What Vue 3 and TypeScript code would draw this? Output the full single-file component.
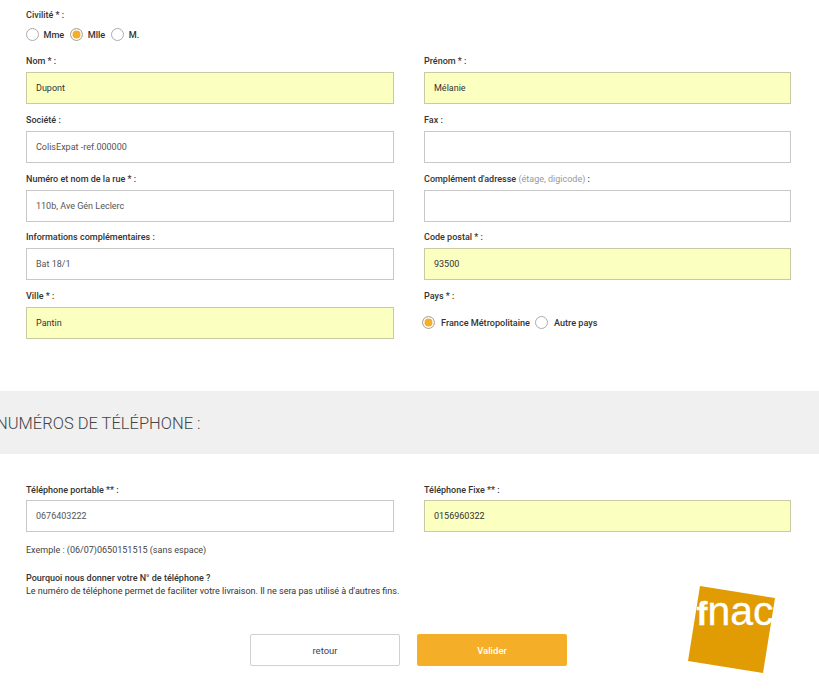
<script setup lang="ts">
interface Field { label: string; hint?: string; value: string; filled?: boolean }
const addressFields: Field[] = [
  { label: 'Nom * :', value: 'Dupont', filled: true },
  { label: 'Prénom * :', value: 'Mélanie', filled: true },
  { label: 'Société :', value: 'ColisExpat -ref.000000' },
  { label: 'Fax :', value: '' },
  { label: 'Numéro et nom de la rue * :', value: '110b, Ave Gén Leclerc' },
  { label: "Complément d'adresse", hint: '(étage, digicode)', value: '' },
  { label: 'Informations complémentaires :', value: 'Bat 18/1' },
  { label: 'Code postal * :', value: '93500', filled: true },
  { label: 'Ville * :', value: 'Pantin', filled: true },
]
const phoneFields: Field[] = [
  { label: 'Téléphone portable ** :', value: '0676403222' },
  { label: 'Téléphone Fixe ** :', value: '0156960322', filled: true },
]
</script>

<template>
  <div class="page">
    <section class="identity">
      <div class="label">Civilité * :</div>
      <div class="radios civ">
        <span class="radio"></span><span class="opt">Mme</span>
        <span class="radio on"></span><span class="opt">Mlle</span>
        <span class="radio"></span><span class="opt">M.</span>
      </div>
    </section>

    <section class="grid">
      <div v-for="f in addressFields" :key="f.label" class="field">
        <div class="label">{{ f.label }}<template v-if="f.hint">{{ ' ' }}<span class="hint">{{ f.hint }}</span>{{ ' :' }}</template></div>
        <input class="input" :class="{ filled: f.filled }" :value="f.value" readonly />
      </div>
      <div class="field">
        <div class="label">Pays * :</div>
        <div class="radios pays">
          <span class="radio on"></span><span class="opt">France Métropolitaine</span>
          <span class="radio"></span><span class="opt">Autre pays</span>
        </div>
      </div>
    </section>

    <h2 class="banner">NUMÉROS DE TÉLÉPHONE :</h2>

    <section class="grid phones">
      <div v-for="f in phoneFields" :key="f.label" class="field">
        <div class="label">{{ f.label }}</div>
        <input class="input" :class="{ filled: f.filled }" :value="f.value" readonly />
      </div>
    </section>

    <p class="example">Exemple : (06/07)0650151515 (sans espace)</p>
    <p class="why"><strong>Pourquoi nous donner votre N° de téléphone ?</strong><br />Le numéro de téléphone permet de faciliter votre livraison. Il ne sera pas utilisé à d'autres fins.</p>

    <div class="actions">
      <button class="btn back" type="button">retour</button>
      <button class="btn ok" type="button">Valider</button>
    </div>

    <svg class="logo" width="100" height="100" viewBox="0 0 100 100" aria-label="fnac">
      <polygon points="14,2 89,14 77,89 2,77" fill="#e09c02" />
      <text x="10.5" y="41" class="logo-text"><tspan class="logo-f">f</tspan>nac</text>
    </svg>
  </div>
</template>

<style scoped>
.page {
  position: relative;
  width: 819px;
  height: 698px;
  overflow: hidden;
  background: #fff;
  font-family: Roboto, "Liberation Sans", sans-serif;
  font-size: 9px;
  color: #333;
}
.identity { padding: 8px 26px 0; }
.label {
  height: 14px;
  line-height: 14px;
  font-weight: 500;
  color: #333;
  margin-bottom: 4px;
  white-space: nowrap;
}
.hint { font-weight: 400; color: #999; }
.radios { display: flex; align-items: center; }
.radio {
  box-sizing: border-box;
  flex: none;
  width: 13px;
  height: 13px;
  border: 1px solid #ababab;
  border-radius: 50%;
  background: #fff;
}
.radio.on {
  background: #f5ae27;
  box-shadow: inset 0 0 0 1.5px #fff;
}
.opt { font-size: 9.1px; font-weight: 500; margin: 0 5px 0 6px; white-space: nowrap; }
.civ { height: 13px; margin-top: 6px; }
.civ .opt { margin: 0 6px 0 4.5px; }
.pays { margin: 13px 0 0 -2px; height: 13px; }
.grid {
  display: grid;
  grid-template-columns: 368px 367px;
  column-gap: 30px;
  row-gap: 8.75px;
  padding: 13px 26px 0;
}
.input {
  display: block;
  box-sizing: border-box;
  width: 100%;
  height: 32px;
  padding: 0 9px;
  border: 1px solid #c8c8c8;
  background: #fff;
  font: 400 9px Roboto, "Liberation Sans", sans-serif;
  color: #555;
  outline: none;
}
.input.filled {
  background: #fbffc0;
  border-color: #c9c9a2;
  color: #333;
}
.banner {
  margin: 52px 0 0;
  height: 63px;
  line-height: 65px;
  text-indent: -4px;
  background: #f0f0f0;
  font-weight: 300;
  font-size: 16.5px;
  color: #444;
  white-space: nowrap;
}
.phones { padding-top: 29px; }
.phones .label { margin-bottom: 3px; }
.example {
  margin: 12px 26px 0;
  line-height: 12px;
  color: #444;
}
.why {
  margin: 16px 26px 0;
  line-height: 13px;
  color: #333;
}
.why strong { font-weight: 500; }
.actions {
  display: flex;
  gap: 17px;
  margin: 36px 0 0 250px;
}
.btn {
  box-sizing: border-box;
  width: 150px;
  height: 32px;
  border-radius: 2px;
  font: 400 9.5px Roboto, "Liberation Sans", sans-serif;
  padding: 0;
}
.back { background: #fff; border: 1px solid #d0d0d0; color: #444; }
.ok { background: #f5ae27; border: 0; color: #fff; font-weight: 500; }
.logo { position: absolute; left: 686px; top: 584px; }
.logo-text {
  font-family: "Liberation Sans", sans-serif;
  font-size: 41px;
  fill: #fff;
  stroke: #fff;
  stroke-width: 0.3px;
}
.logo-f { font-size: 33px; font-weight: 700; }
</style>
